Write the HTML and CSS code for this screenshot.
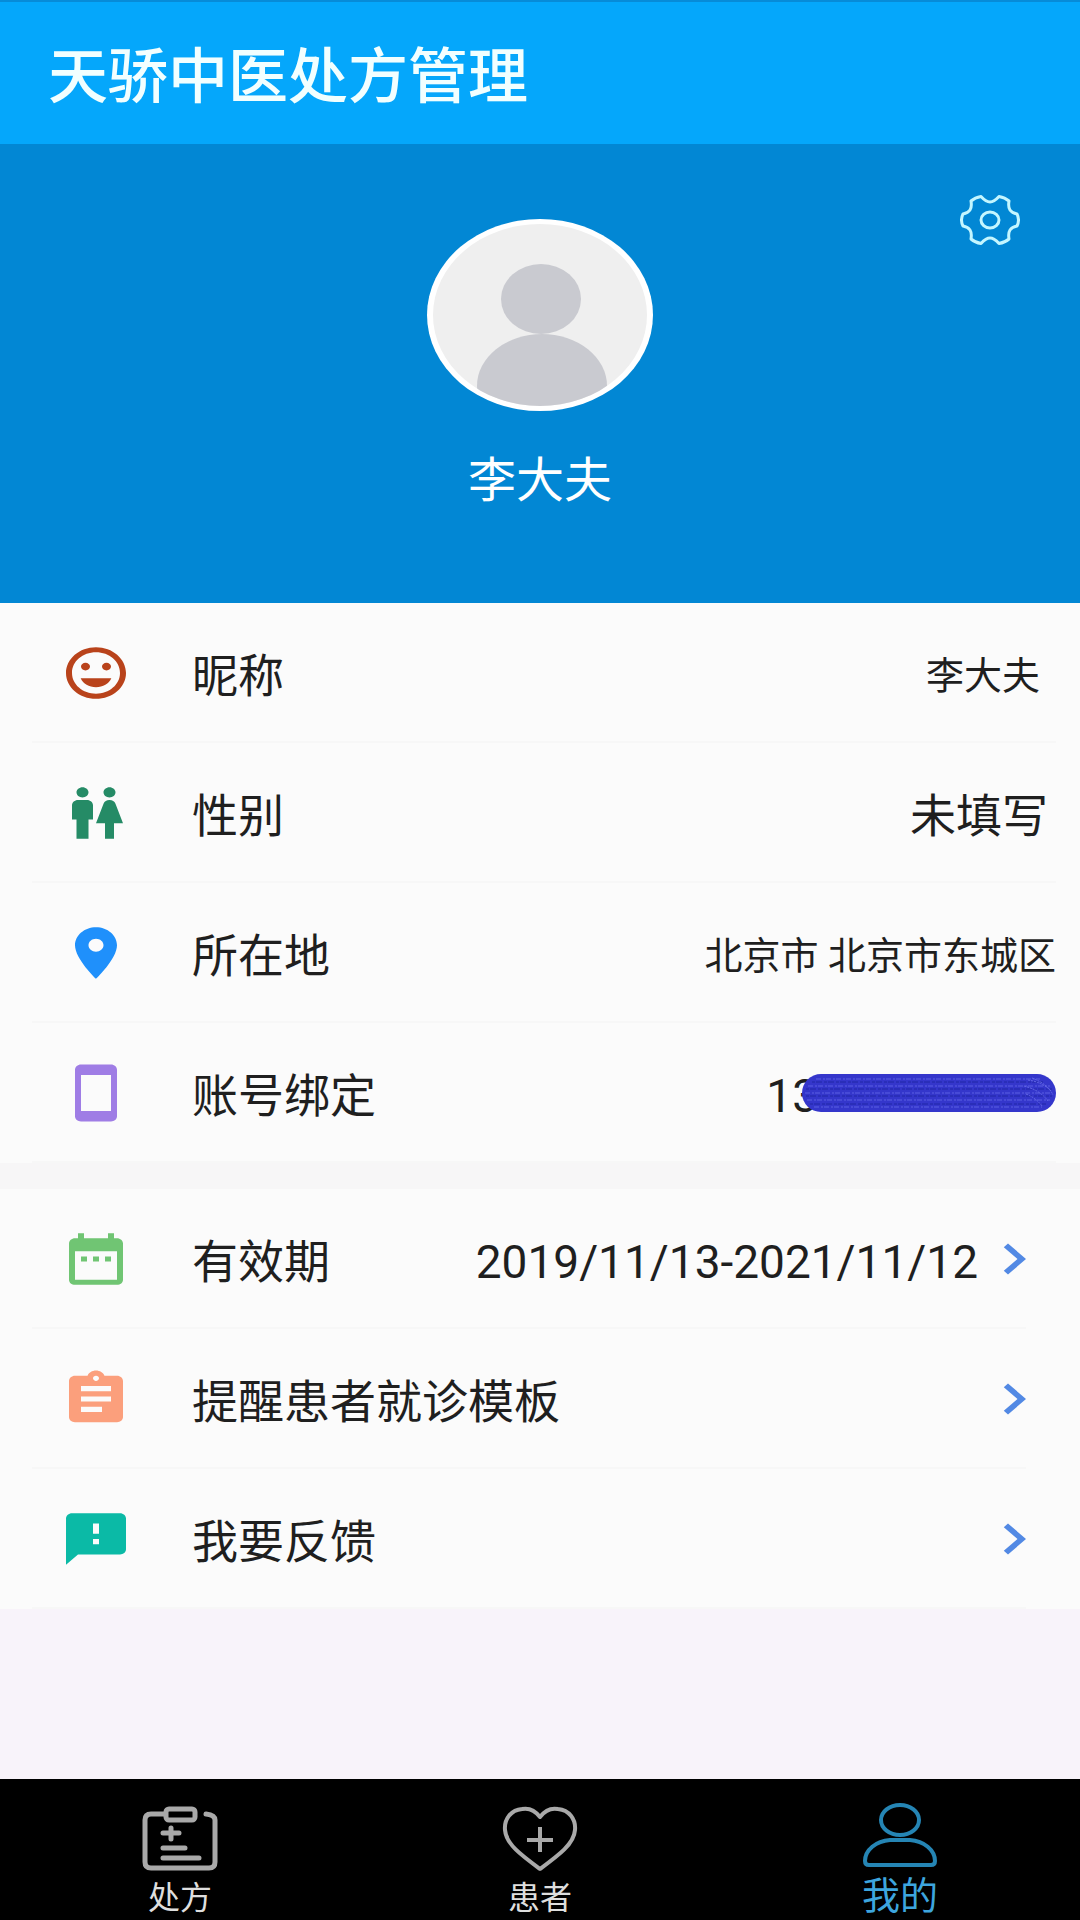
FILE: index.html
```html
<!DOCTYPE html>
<html lang="zh-CN">
<head>
<meta charset="utf-8">
<meta name="viewport" content="width=device-width, initial-scale=1">
<title>天骄中医处方管理</title>
<link rel="stylesheet" href="styles.css">
</head>
<body>
<header class="app-bar">
  <h1 class="app-title">天骄中医处方管理</h1>
</header>

<section class="profile">
  <button class="settings" type="button" aria-label="设置">
    <svg class="settings-icon" viewBox="0 0 60 50" fill="none" stroke="currentColor" stroke-width="3" stroke-linejoin="round">
      <path d="M21 1.500Q26 7 30 7Q34 7 39 1.500Q45 2.500 49 6Q48 12 50 15Q52 18 57 19Q60 25 57 31Q52 32 50 35Q48 38 49 44Q45 47.500 39 48.500Q34 43 30 43Q26 43 21 48.500Q15 47.500 11 44Q12 38 10 35Q8 32 3 31Q0 25 3 19Q8 18 10 15Q12 12 11 6Q15 2.500 21 1.500Z"/>
      <ellipse cx="30" cy="25" rx="9" ry="8"/>
    </svg>
  </button>
  <svg class="avatar" viewBox="0 0 226 192" role="img" aria-label="头像">
    <defs><clipPath id="face"><ellipse cx="113" cy="96" rx="107" ry="91"/></clipPath></defs>
    <ellipse cx="113" cy="96" rx="113" ry="96" fill="#fff"/>
    <ellipse cx="113" cy="96" rx="107" ry="91" fill="#efefef"/>
    <g clip-path="url(#face)" fill="#c9cad0">
      <ellipse cx="114" cy="80" rx="40" ry="35"/>
      <ellipse cx="115" cy="167" rx="65" ry="52"/>
    </g>
  </svg>
  <p class="profile-name">李大夫</p>
</section>

<main class="content">
  <ul class="group">
    <li class="row">
      <svg class="icon mood" viewBox="0 0 24 24" preserveAspectRatio="none"><path d="M11.990 2C6.470 2 2 6.480 2 12s4.470 10 9.990 10C17.520 22 22 17.520 22 12S17.520 2 11.990 2zM12 20c-4.420 0-8-3.580-8-8s3.580-8 8-8 8 3.580 8 8-3.580 8-8 8zm3.500-9c.83 0 1.500-.67 1.500-1.500S16.330 8 15.500 8 14 8.670 14 9.500s.67 1.500 1.500 1.500zm-7 0c.83 0 1.500-.67 1.500-1.500S9.330 8 8.500 8 7 8.670 7 9.500 7.670 11 8.500 11zm3.500 6.500c2.330 0 4.310-1.460 5.110-3.500H6.890c.8 2.040 2.780 3.500 5.110 3.500z"/></svg>
      <span class="label">昵称</span>
      <span class="value small inset-wide">李大夫</span>
    </li>
    <li class="row">
      <svg class="icon gender" viewBox="0 0 24 24" preserveAspectRatio="none"><path d="M5.500 22v-7.500H4V9c0-1.100.9-2 2-2h3c1.100 0 2 .9 2 2v5.500H9.500V22h-4zM18 22v-6h3l-2.540-7.630C18.180 7.550 17.420 7 16.560 7h-.12c-.86 0-1.630.55-1.900 1.370L12 16h3v6h3zM7.500 6c1.110 0 2-.89 2-2s-.89-2-2-2-2 .89-2 2 .89 2 2 2zm9 0c1.110 0 2-.89 2-2s-.89-2-2-2-2 .89-2 2 .89 2 2 2z"/></svg>
      <span class="label">性别</span>
      <span class="value inset">未填写</span>
    </li>
    <li class="row">
      <svg class="icon place" viewBox="0 0 24 24" preserveAspectRatio="none"><path d="M12 2C8.130 2 5 5.130 5 9c0 5.250 7 13 7 13s7-7.750 7-13c0-3.870-3.130-7-7-7zm0 9.500c-1.380 0-2.500-1.120-2.500-2.500s1.120-2.500 2.500-2.500 2.500 1.120 2.500 2.500-1.120 2.500-2.500 2.500z"/></svg>
      <span class="label">所在地</span>
      <span class="value small">北京市 北京市东城区</span>
    </li>
    <li class="row">
      <svg class="icon phone" viewBox="0 0 24 24" preserveAspectRatio="none"><path d="M17 1H7c-1.100 0-2 .9-2 2v18c0 1.100.9 2 2 2h10c1.100 0 2-.9 2-2V3c0-1.100-.9-2-2-2zm0 18H7V5h10v14z"/></svg>
      <span class="label">账号绑定</span>
      <span class="value">13</span>
      <svg class="scribble" viewBox="0 0 254 38" fill="none" aria-hidden="true">
        <rect width="254" height="38" rx="19" fill="#3436cb"/>
        <path d="M14 5H238M6 12H248M3 19H250M5 26H248M12 33H240" stroke="#5a5ee2" stroke-width="1" stroke-dasharray="5 2 2 1"/>
        <path d="M10 8H242M4 15H250M4 22H250M8 30H244" stroke="#2026a6" stroke-width="1" stroke-dasharray="3 1 6 2"/>
        <path d="M226 6Q240 8 249 17M222 12Q238 16 246 27M224 20Q234 24 240 32M230 4Q246 10 251 21" stroke="#6468e6" stroke-width="1" stroke-dasharray="2 1"/>
      </svg>
    </li>
  </ul>

  <ul class="group">
    <li class="item">
      <a class="row row-link" href="#validity">
        <svg class="icon calendar" viewBox="0 0 24 24" preserveAspectRatio="none"><path d="M9 11H7v2h2v-2zm4 0h-2v2h2v-2zm4 0h-2v2h2v-2zm2-7h-1V2h-2v2H8V2H6v2H5c-1.110 0-1.990.9-1.990 2L3 20c0 1.100.89 2 2 2h14c1.100 0 2-.9 2-2V6c0-1.100-.9-2-2-2zm0 16H5V9h14v11z"/></svg>
        <span class="label">有效期</span>
        <span class="value">2019/11/13-2021/11/12</span>
        <svg class="icon chevron" viewBox="0 0 24 24" preserveAspectRatio="none"><path d="M10 6L8.590 7.410 13.170 12l-4.580 4.590L10 18l6-6z"/></svg>
      </a>
    </li>
    <li class="item">
      <a class="row row-link" href="#template">
        <svg class="icon clipboard" viewBox="0 0 24 24" preserveAspectRatio="none"><path d="M19 3h-4.180C14.400 1.840 13.300 1 12 1c-1.300 0-2.400.84-2.820 2H5c-1.100 0-2 .9-2 2v14c0 1.100.9 2 2 2h14c1.100 0 2-.9 2-2V5c0-1.100-.9-2-2-2zm-7 0c.55 0 1 .45 1 1s-.45 1-1 1-1-.45-1-1 .45-1 1-1zm2 14H7v-2h7v2zm3-4H7v-2h10v2zm0-4H7V7h10v2z"/></svg>
        <span class="label">提醒患者就诊模板</span>
        <svg class="icon chevron" viewBox="0 0 24 24" preserveAspectRatio="none"><path d="M10 6L8.590 7.410 13.170 12l-4.580 4.590L10 18l6-6z"/></svg>
      </a>
    </li>
    <li class="item">
      <a class="row row-link" href="#feedback">
        <svg class="icon feedback" viewBox="0 0 24 24" preserveAspectRatio="none"><path d="M20 2H4c-1.100 0-1.990.9-1.990 2L2 22l4-4h14c1.100 0 2-.9 2-2V4c0-1.100-.9-2-2-2zm-7 12h-2v-2h2v2zm0-4h-2V6h2v4z"/></svg>
        <span class="label">我要反馈</span>
        <svg class="icon chevron" viewBox="0 0 24 24" preserveAspectRatio="none"><path d="M10 6L8.590 7.410 13.170 12l-4.580 4.590L10 18l6-6z"/></svg>
      </a>
    </li>
  </ul>
</main>

<nav class="tabs">
  <a class="tab" href="#prescriptions">
    <svg class="tab-icon" viewBox="0 0 76 66" fill="none" stroke="currentColor" stroke-linecap="round" stroke-linejoin="round">
      <path d="M22 8H9Q3 8 3 14V56Q3 62 9 62H67Q73 62 73 56V14Q73 9 64 8" stroke-width="5"/>
      <rect x="24" y="3" width="29" height="11" rx="3" stroke-width="5"/>
      <path d="M21 27H37M29 22V33M21 42H43M21 52H57" stroke-width="5"/>
    </svg>
    <span class="tab-label">处方</span>
  </a>
  <a class="tab" href="#patients">
    <svg class="tab-icon" viewBox="0 0 76 66" fill="none" stroke="currentColor" stroke-width="4" stroke-linejoin="round">
      <path d="M38 11C32 3 25 2 20 3C9 4 2 13 3 24C4 38 19 49 38 63C57 49 72 38 73 24C74 13 67 4 56 3C51 2 44 3 38 11Z"/>
      <path d="M38 21V46M25 34H51"/>
    </svg>
    <span class="tab-label">患者</span>
  </a>
  <a class="tab tab-active" href="#me" aria-current="page">
    <svg class="tab-icon" viewBox="0 0 76 66" fill="none" stroke="currentColor" stroke-width="4" stroke-linejoin="round">
      <ellipse cx="38" cy="18" rx="19" ry="15"/>
      <path d="M28 38H48C62 39 73 48 73 59Q73 63 69 63H7Q3 63 3 59C3 48 14 39 28 38Z"/>
    </svg>
    <span class="tab-label">我的</span>
  </a>
</nav>
</body>
</html>
```

FILE: styles.css
```css
* {
  box-sizing: border-box;
}

body {
  margin: 0;
  min-height: 100vh;
  display: flex;
  flex-direction: column;
  background: #f8f3fa;
  color: #1f1f1f;
  font-family: Roboto, "Noto Sans CJK SC", sans-serif;
}

.app-bar {
  display: flex;
  align-items: center;
  height: 144px;
  padding: 10px 48px 0;
  border-top: 2px solid #078bd8;
  background: #05a7fb;
}

.app-title {
  margin: 0;
  color: #f2ffff;
  font-size: 60px;
  font-weight: 500;
  line-height: 72px;
}

.profile {
  position: relative;
  display: flex;
  flex-direction: column;
  align-items: center;
  gap: 34px;
  height: 459px;
  padding-top: 75px;
  background: #0287d4;
}

.settings {
  position: absolute;
  top: 51px;
  right: 60px;
  padding: 0;
  border: 0;
  background: none;
  color: #c4f6ff;
}

.settings-icon {
  display: block;
  width: 60px;
  height: 50px;
}

.avatar {
  width: 226px;
  height: 192px;
}

.profile-name {
  margin: 0;
  color: #fff;
  font-size: 48px;
  line-height: 72px;
}

.content {
  flex: 1;
}

.group {
  margin: 0;
  padding: 0;
  list-style: none;
  background: #fbfbfb;
}

.group + .group {
  border-top: 26px solid #f7f6f7;
}

.row {
  display: flex;
  align-items: center;
  height: 140px;
  padding: 0 24px 0 60px;
  background: linear-gradient(#f7f7f7, #f7f7f7) 32px 100% / calc(100% - 56px) 2px no-repeat;
}

.row-link {
  padding-right: 30px;
  background-size: calc(100% - 86px) 2px;
  color: inherit;
  text-decoration: none;
}

.icon {
  flex: none;
  width: 72px;
  height: 62px;
  fill: currentColor;
}

.mood { color: #b9431b; }
.gender { color: #258b66; }
.place { color: #1f90fb; }
.phone { color: #9f7de5; }
.calendar { color: #70c573; }
.clipboard { color: #fb9f7c; }
.feedback { color: #0bbaa6; }
.chevron { color: #5289e4; }

.label {
  flex: 1;
  margin-left: 60px;
}

.label,
.value {
  padding-top: 6px;
  font-size: 46px;
  line-height: 64px;
}

.small { font-size: 38px; }
.inset { margin-right: 8px; }
.inset-wide { margin-right: 16px; }

.scribble {
  flex: none;
  width: 254px;
  height: 38px;
  margin-left: -16px;
}

.tabs {
  display: flex;
  height: 141px;
  background: #000;
}

.tab {
  flex: 1;
  display: flex;
  flex-direction: column;
  align-items: center;
  justify-content: flex-end;
  gap: 8px;
  padding-bottom: 4px;
  color: #a9a9a9;
  text-decoration: none;
}

.tab-icon {
  width: 76px;
  height: 66px;
}

.tab-label {
  color: #dedede;
  font-size: 32px;
  line-height: 36px;
}

.tab-active {
  color: #2585b4;
}

.tab-active .tab-label {
  color: #3da5de;
  font-size: 38px;
  line-height: 40px;
}
```
